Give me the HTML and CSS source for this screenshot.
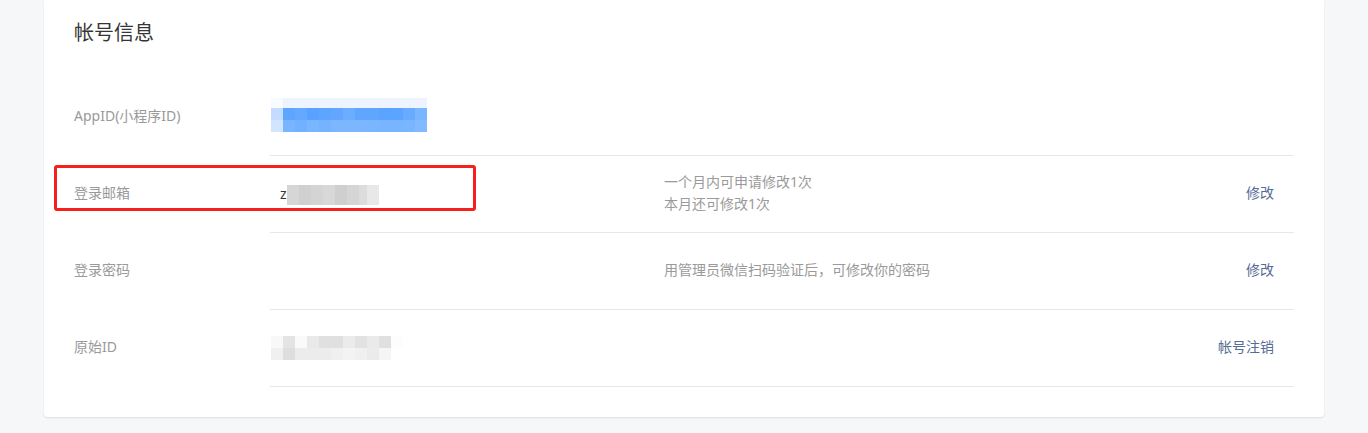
FILE: index.html
```html
<!DOCTYPE html>
<html lang="zh-CN">
<head>
<meta charset="utf-8">
<title>帐号信息</title>
<link rel="stylesheet" href="styles.css">
</head>
<body>
<div class="page">
  <section class="card">
    <h2 class="card-title">帐号信息</h2>
    <div class="info-list">
      <div class="info-row">
        <div class="info-label">AppID(小程序ID)</div>
        <div class="info-body">
          <div class="info-value"><span class="mask mask-appid"></span></div>
          <div class="info-desc"></div>
          <div class="info-action"></div>
        </div>
      </div>
      <div class="info-row">
        <div class="highlight-box"></div>
        <div class="info-label">登录邮箱</div>
        <div class="info-body">
          <div class="info-value email"><span class="email-text">z</span><span class="mask mask-email"></span></div>
          <div class="info-desc"><p>一个月内可申请修改1次</p><p>本月还可修改1次</p></div>
          <div class="info-action"><a href="#" class="link">修改</a></div>
        </div>
      </div>
      <div class="info-row">
        <div class="info-label">登录密码</div>
        <div class="info-body">
          <div class="info-value"></div>
          <div class="info-desc"><p>用管理员微信扫码验证后，可修改你的密码</p></div>
          <div class="info-action"><a href="#" class="link">修改</a></div>
        </div>
      </div>
      <div class="info-row">
        <div class="info-label">原始ID</div>
        <div class="info-body">
          <div class="info-value"><span class="mask mask-id"></span></div>
          <div class="info-desc"></div>
          <div class="info-action"><a href="#" class="link">帐号注销</a></div>
        </div>
      </div>
    </div>
  </section>
</div>
</body>
</html>
```

FILE: styles.css
```css
* { box-sizing: border-box; }
html, body {
  margin: 0;
  padding: 0;
  background: #f6f7f9;
  font-family: "Noto Sans", "Noto Sans CJK SC", sans-serif;
  font-size: 14px;
  color: #353535;
}
.page {
  padding: 0 44px 16px 44px;
}
.card {
  position: relative;
  background: #fff;
  border-radius: 0 0 4px 4px;
  box-shadow: 0 1px 2px rgba(0, 0, 0, 0.1);
  padding: 19px 30px 30px 30px;
}
.card-title {
  margin: 0;
  font-size: 20px;
  font-weight: normal;
  line-height: 28px;
  color: #353535;
}
.info-list {
  margin-top: 32px;
}
.info-row {
  position: relative;
  display: flex;
  height: 77px;
}
.info-label {
  width: 196px;
  flex: none;
  display: flex;
  align-items: center;
  line-height: 20px;
  color: #9a9a9a;
  padding-bottom: 3px;
}
.info-body {
  flex: 1;
  display: flex;
  align-items: center;
  border-bottom: 1px solid #e7e7eb;
}
.info-value {
  width: 394px;
  flex: none;
  display: flex;
  align-items: center;
}
.info-desc {
  flex: 1;
  color: #9a9a9a;
  line-height: 22px;
  padding-bottom: 2px;
}
.info-desc p { margin: 0; }
.info-action {
  padding-right: 20px;
  line-height: 20px;
  padding-bottom: 2px;
}
.link {
  color: #576b95;
  text-decoration: none;
}
.highlight-box {
  position: absolute;
  left: -20px;
  top: 9px;
  width: 422px;
  height: 46px;
  border: 3px solid #f5201c;
  border-radius: 3px;
  pointer-events: none;
}
.mask { display: block; }
.mask-appid {
  width: 156px;
  height: 34px;
  margin-left: 1px;
  margin-bottom: 5px;
  background:
    linear-gradient(90deg, #f8fbff 0 12px, #eef4ff 12px) 0 0 / 100% 10px no-repeat,
    linear-gradient(90deg, #c4dcff 0 12px, #5ea5ff 12px 24px, #64a8ff 24px 36px, #5aa2ff 36px 48px, #5ea5ff 48px 60px, #62a6ff 60px 72px, #6dadff 72px 84px, #60a6ff 84px 108px, #5aa4ff 108px 120px, #5ba4ff 120px 132px, #68abff 132px 144px, #7ab5ff 144px) 0 10px / 100% 12px no-repeat,
    linear-gradient(90deg, #d2e5ff 0 12px, #78b4ff 12px 24px, #72b1ff 24px 36px, #7ab5ff 36px 48px, #76b3ff 48px 60px, #7cb6ff 60px 96px, #7ab5ff 96px 108px, #78b4ff 108px 132px, #7ab5ff 132px 144px, #82baff 144px) 0 22px / 100% 12px no-repeat;
}
.email {
  padding-left: 10px;
}
.email-text {
  color: #353535;
  line-height: 20px;
}
.mask-email {
  width: 92px;
  height: 20px;
  margin-top: 1px;
  background: linear-gradient(90deg, #d6d6d6 0 12px, #d0d0d0 12px 24px, #d4d4d4 24px 36px, #d8d8d8 36px 48px, #cfcfcf 48px 60px, #d5d5d5 60px 72px, #dcdcdc 72px 80px, #e8e8e8 80px);
}
.mask-id {
  width: 132px;
  height: 24px;
  margin-left: 1px;
  background:
    linear-gradient(90deg, #f8f8f8 0 12px, #e4e4e4 12px 24px, #fafafa 24px 36px, #e9e9e9 36px 48px, #e0e0e0 48px 72px, #ebebeb 72px 84px, #e2e2e2 84px 96px, #eaeaea 96px 108px, #e0e0e0 108px 120px, #fdfdfd 120px) 0 0 / 100% 12px no-repeat,
    linear-gradient(90deg, #f0f0f0 0 12px, #dedede 12px 24px, #ececec 24px 60px, #f0f0f0 60px 72px, #f3f3f3 72px 84px, #f0f0f0 84px 96px, #ebebeb 96px 108px, #f5f5f5 108px 120px, #ffffff 120px) 0 12px / 100% 12px no-repeat;
}
```
